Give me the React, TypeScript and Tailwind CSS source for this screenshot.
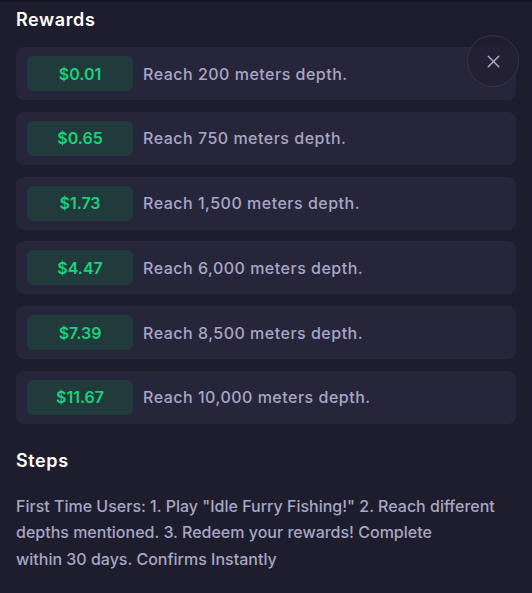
import React from 'react';
import { X } from 'lucide-react';

const rewards = [
  { amount: '$0.01', text: 'Reach 200 meters depth.' },
  { amount: '$0.65', text: 'Reach 750 meters depth.' },
  { amount: '$1.73', text: 'Reach 1,500 meters depth.' },
  { amount: '$4.47', text: 'Reach 6,000 meters depth.' },
  { amount: '$7.39', text: 'Reach 8,500 meters depth.' },
  { amount: '$11.67', text: 'Reach 10,000 meters depth.' },
];

const App: React.FC = () => {
  return (
    <div className="relative min-h-[593px] w-[532px] bg-[#1e1d2d] font-['Inter',sans-serif] border-t-2 border-[#141420]">
      <div className="px-4 pt-[6px]">
        <h2 className="text-[18px] font-semibold leading-[24px] tracking-[0.6px] text-white">Rewards</h2>

        <div className="mt-[15px] flex flex-col gap-[11.8px]">
          {rewards.map((r) => (
            <div key={r.amount} className="flex h-[53px] items-center gap-[10px] rounded-lg bg-[#262539] px-[11px]">
              <div className="flex h-[35px] w-[106px] items-center justify-center rounded-md bg-[#213a3c] text-[16px] font-semibold text-[#18d37a]">
                {r.amount}
              </div>
              <span className="text-[16px] font-medium tracking-[0.5px] text-[#a8a7c6]">{r.text}</span>
            </div>
          ))}
        </div>

        <h2 className="mt-[25px] text-[18px] font-semibold leading-[24px] tracking-[0.6px] text-white">Steps</h2>
        <p className="mt-[20px] text-[16px] font-medium leading-[26.5px] text-[#a8a7c6]">
          First Time Users: 1. Play "Idle Furry Fishing!" 2. Reach different
          <br />
          depths mentioned. 3. Redeem your rewards! Complete
          <br />
          within 30 days. Confirms Instantly
        </p>
      </div>

      <button className="absolute left-[467px] top-[33px] flex h-[52px] w-[52px] items-center justify-center rounded-full border border-[#353449] bg-[#1f1e2e]/60 text-[#aeadd0]">
        <X className="h-[21px] w-[21px]" strokeWidth={1.6} />
      </button>
    </div>
  );
};

export default App;
